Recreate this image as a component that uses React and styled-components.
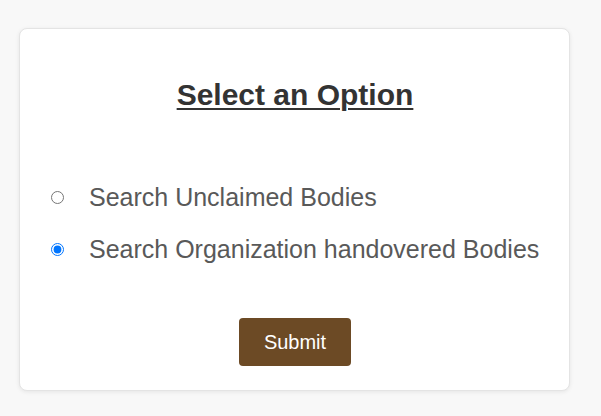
import React, { useState } from 'react';
import styled, { createGlobalStyle } from 'styled-components';

const GlobalStyle = createGlobalStyle`
	html, body {
		margin: 0;
		padding: 0;
		background: #f8f8f8;
		font-family: 'Liberation Sans', Arial, sans-serif;
	}
`;

const Page = styled.div`
	padding: 28px 31px 25px 19px;
`;

const Card = styled.form`
	box-sizing: border-box;
	width: 551px;
	height: 363px;
	background: #fff;
	border: 1px solid #e4e4e4;
	border-radius: 8px;
	box-shadow: 0 1px 4px rgba(0, 0, 0, 0.08);
	padding: 49px 20px 0 31px;
	display: flex;
	flex-direction: column;
`;

const Title = styled.h2`
	margin: 0;
	padding-right: 10px;
	font-size: 30px;
	font-weight: 700;
	line-height: 34px;
	color: #333;
	text-align: center;
	text-decoration: underline;
	text-underline-offset: 3px;
	text-decoration-thickness: 2px;
`;

const Options = styled.div`
	margin-top: 71px;
	display: flex;
	flex-direction: column;
	gap: 23px;
`;

const Option = styled.label`
	display: flex;
	align-items: center;
	gap: 25px;
	font-size: 25px;
	line-height: 29px;
	color: #595959;
	white-space: nowrap;
	cursor: pointer;

	input {
		width: 13px;
		height: 13px;
		margin: 0;
		flex-shrink: 0;
	}
`;

const Actions = styled.div`
	margin-top: 54px;
	padding-right: 10px;
	display: flex;
	justify-content: center;
`;

const Button = styled.button`
	background: #6c4a25;
	color: #fff;
	border: none;
	border-radius: 4px;
	font-family: inherit;
	font-size: 20px;
	line-height: 24px;
	padding: 12px 25px;
	cursor: pointer;
`;

export default function App() {
	const [choice, setChoice] = useState('organization');

	return (
		<>
			<GlobalStyle />
			<Page>
				<Card onSubmit={e => e.preventDefault()}>
					<Title>Select an Option</Title>
					<Options>
						<Option>
							<input
								type='radio'
								name='search'
								checked={choice === 'unclaimed'}
								onChange={() => setChoice('unclaimed')}
							/>
							Search Unclaimed Bodies
						</Option>
						<Option>
							<input
								type='radio'
								name='search'
								checked={choice === 'organization'}
								onChange={() => setChoice('organization')}
							/>
							Search Organization handovered Bodies
						</Option>
					</Options>
					<Actions>
						<Button type='submit'>Submit</Button>
					</Actions>
				</Card>
			</Page>
		</>
	);
}
